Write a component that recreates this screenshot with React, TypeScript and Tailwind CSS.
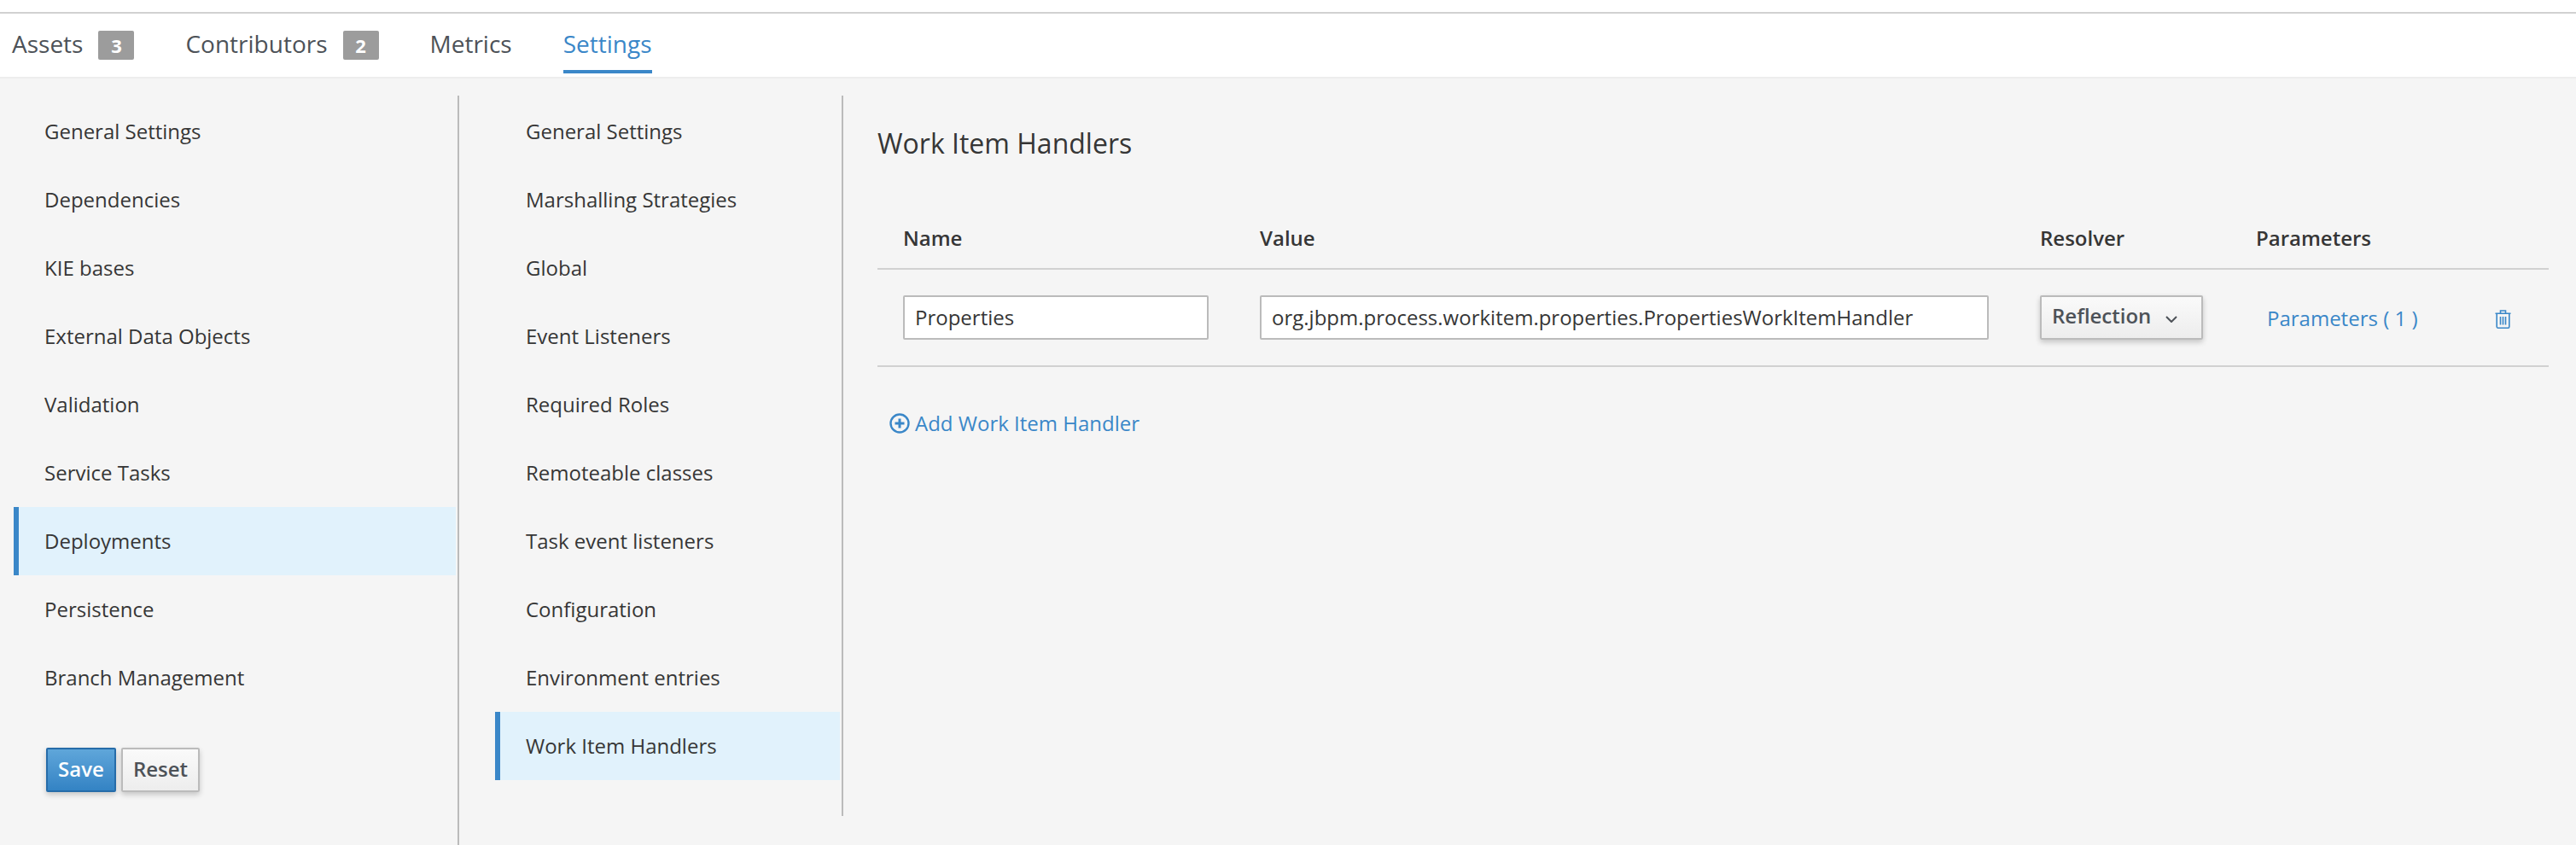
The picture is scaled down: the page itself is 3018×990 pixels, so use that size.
import React from 'react';

const primaryNav = [
  'General Settings',
  'Dependencies',
  'KIE bases',
  'External Data Objects',
  'Validation',
  'Service Tasks',
  'Deployments',
  'Persistence',
  'Branch Management',
];

const deploymentNav = [
  'General Settings',
  'Marshalling Strategies',
  'Global',
  'Event Listeners',
  'Required Roles',
  'Remoteable classes',
  'Task event listeners',
  'Configuration',
  'Environment entries',
  'Work Item Handlers',
];

const NavItem: React.FC<{ label: string; active: boolean }> = ({ label, active }) => (
  <div
    className={`flex h-20 items-center border-l-[6px] pl-[30px] ${
      active ? 'border-[#3a87c8] bg-[#e1f2fc]' : 'border-transparent'
    }`}
  >
    {label}
  </div>
);

const Tab: React.FC<{ label: string; count?: number; active?: boolean; className: string }> = ({
  label,
  count,
  active,
  className,
}) => (
  <div className={`flex h-full items-start ${className}`}>
    <span
      className={`flex h-[70px] items-center border-b-[4px] pt-[4px] ${
        active ? 'border-[#3a87c8] text-[#3a87c8]' : 'border-transparent text-[#4d5258]'
      }`}
    >
      {label}
    </span>
    {count !== undefined && (
      <span className="ml-[18px] mt-[20px] flex h-[34px] w-[42px] items-center justify-center rounded-[2px] bg-[#9c9c9c] text-[22px] font-bold text-white">
        {count}
      </span>
    )}
  </div>
);

export default function App() {
  return (
    <div className="h-[990px] w-[3018px] overflow-hidden bg-white font-['Open_Sans','Noto_Sans',sans-serif] text-[24px] text-[#363636]">
      <div className="h-[16px] border-b-[2px] border-[#d1d1d1]" />
      <div className="flex h-[76px] border-b-[2px] border-[#ededed] pl-[14px] text-[28px]">
        <Tab label="Assets" count={3} className="mr-[60px]" />
        <Tab label="Contributors" count={2} className="mr-[60px]" />
        <Tab label="Metrics" className="mr-[60px]" />
        <Tab label="Settings" active className="" />
      </div>

      <div className="flex h-[898px] bg-[#f5f5f5] pt-[20px]">
        <div className="flex w-[538px] flex-col border-r-[2px] border-[#bbbbbb] pl-[16px] pr-[2px] pt-[2px]">
          {primaryNav.map((item) => (
            <NavItem key={item} label={item} active={item === 'Deployments'} />
          ))}
          <div className="ml-[38px] mt-[42px] flex gap-[6px] font-semibold">
            <button className="h-[52px] w-[82px] rounded-[2px] border-[2px] border-[#266ca9] bg-gradient-to-b from-[#5fa6da] to-[#3383c4] pb-[3px] text-white shadow-[0_3px_6px_rgba(0,0,0,0.2)]">
              Save
            </button>
            <button className="h-[52px] w-[92px] rounded-[2px] border-[2px] border-[#bbbbbb] bg-gradient-to-b from-[#fafafa] to-[#ededed] pb-[3px] text-[#4d5258] shadow-[0_3px_6px_rgba(0,0,0,0.2)]">
              Reset
            </button>
          </div>
        </div>

        <div className="ml-[42px] flex h-[844px] w-[408px] flex-col border-r-[2px] border-[#bbbbbb] pr-[2px] pt-[2px]">
          {deploymentNav.map((item) => (
            <NavItem key={item} label={item} active={item === 'Work Item Handlers'} />
          ))}
        </div>

        <div className="ml-[40px] w-[1958px]">
          <h1 className="mt-[34px] text-[32px] font-normal leading-[44px]">Work Item Handlers</h1>

          <div className="mt-[62px] flex h-[64px] items-center border-b-[2px] border-[#d1d1d1] pb-[8px] font-semibold">
            <div className="w-[448px] pl-[30px]">Name</div>
            <div className="w-[914px]">Value</div>
            <div className="w-[253px]">Resolver</div>
            <div>Parameters</div>
          </div>

          <div className="flex h-[114px] items-center border-b-[2px] border-[#d1d1d1]">
            <div className="w-[448px] pl-[30px]">
              <div className="flex h-[52px] w-[358px] items-center rounded-[2px] border-[2px] border-[#bbbbbb] bg-white pl-[12px]">
                Properties
              </div>
            </div>
            <div className="w-[914px]">
              <div className="flex h-[52px] w-[854px] items-center rounded-[2px] border-[2px] border-[#bbbbbb] bg-white pl-[12px]">
                org.jbpm.process.workitem.properties.PropertiesWorkItemHandler
              </div>
            </div>
            <div className="w-[266px]">
              <div className="flex h-[52px] w-[191px] items-center rounded-[2px] border-[2px] border-[#bbbbbb] bg-gradient-to-b from-[#fafafa] to-[#ededed] pl-[12px] font-semibold text-[#4d5258] shadow-[0_3px_6px_rgba(0,0,0,0.2)]">
                <span className="mb-[4px]">Reflection</span>
                <svg className="ml-[17px] mt-[4px]" width="14" height="8" viewBox="0 0 14 8" fill="none" stroke="#4d5258" strokeWidth="2">
                  <path d="M1 1l6 6 6-6" />
                </svg>
              </div>
            </div>
            <div className="w-[267px] pt-[2px] text-[#3a87c8]">Parameters ( 1 )</div>
            <svg className="mt-[3px]" width="19" height="22" viewBox="0 0 19 22" fill="none" stroke="#3a87c8" strokeWidth="1.6">
              <path d="M0.5 4.2h18M6.5 4V1h6v3M2.2 4.2v15.6a1.4 1.4 0 0 0 1.4 1.4h11.8a1.4 1.4 0 0 0 1.4-1.4V4.2M6.5 8v9.5M9.5 8v9.5M12.5 8v9.5" />
            </svg>
          </div>

          <div className="mt-[48px] flex items-center pl-[14px] text-[#3a87c8]">
            <svg width="24" height="24" viewBox="0 0 24 24" fill="none" stroke="#3a87c8">
              <circle cx="12" cy="12" r="10.5" strokeWidth="2.4" />
              <path d="M12 6.5v11M6.5 12h11" strokeWidth="3" />
            </svg>
            <span className="ml-[6px]">Add Work Item Handler</span>
          </div>
        </div>
      </div>
    </div>
  );
}
